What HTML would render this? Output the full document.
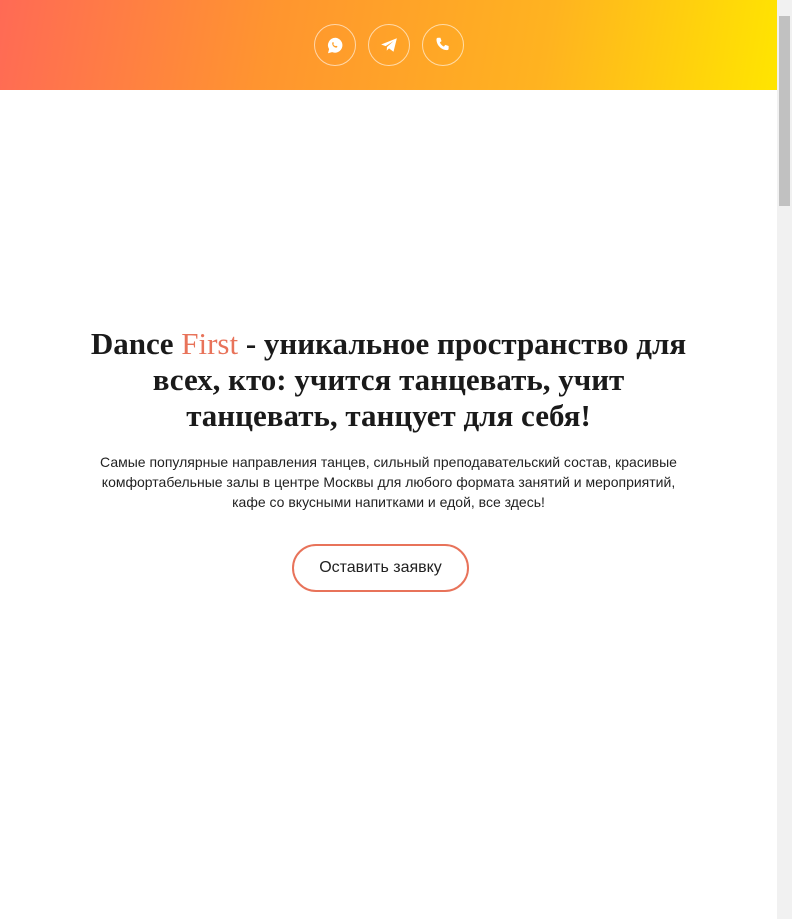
<!DOCTYPE html>
<html><head><meta charset="utf-8"><style>
html,body{margin:0;padding:0;}
body{width:792px;height:919px;overflow:hidden;background:#fff;font-family:"Liberation Sans",sans-serif;position:relative;}
.hdr{position:absolute;left:0;top:0;width:777px;height:90px;background:linear-gradient(100deg,#ff6a55 0%,#ff952f 35%,#ffb320 70%,#ffe500 100%);}
.ic{position:absolute;top:24px;width:40px;height:40px;border:1px solid rgba(255,255,255,.6);border-radius:50%;display:flex;align-items:center;justify-content:center;}
.sb{position:absolute;right:0;top:0;width:15px;height:919px;background:#f1f1f1;}
.th{position:absolute;right:2px;top:16px;width:11px;height:190px;background:#c1c1c1;}
h1{position:absolute;left:0;width:777px;top:326px;margin:0;text-align:center;font-family:"Liberation Serif",serif;font-weight:bold;font-size:31px;line-height:36px;color:#1a1a1a;}
h1 span{color:#e8735a;font-weight:normal;}
p{position:absolute;left:88px;width:601px;top:452px;margin:0;text-align:center;font-size:14px;line-height:20px;color:#222;}
.btn{position:absolute;left:292px;top:544px;width:173px;height:44px;border:2px solid #e8735a;border-radius:24px;display:flex;align-items:center;justify-content:center;font-size:16px;color:#222;}
</style></head><body>
<div class="hdr">
<div class="ic" style="left:314px"><svg width="19" height="19" viewBox="0 0 16 16"><path d="M8 1.5a6.3 6.3 0 0 0-5.4 9.6L1.7 14.5l3.4-.9A6.3 6.3 0 1 0 8 1.5z" fill="#fff"/><path d="M6 5c.4 0 .6 1.3.4 1.6-.3.3-.2.5.3 1.1.5.6 1 .9 1.3.7.3-.3 1.6 0 1.6.4 0 .6-.6 1-1.2 1C7 9.8 5.2 8 5.2 6.3 5.2 5.6 5.6 5 6 5z" fill="#ffa02a"/></svg></div>
<div class="ic" style="left:368px"><svg width="18" height="18" viewBox="0 0 16 16"><path d="M1 7.5L15 2l-3 12-4-3-2 2 .2-3.2L12 4.5 5 9z" fill="#fff"/></svg></div>
<div class="ic" style="left:422px"><svg width="18" height="18" viewBox="0 0 16 16"><path d="M3.5 1.5l2.2 0 1 3-1.5 1.2c.7 1.7 2 3 3.6 3.7l1.2-1.5 3 1v2.3c0 .8-.7 1.3-1.5 1.3C6.6 12.5 2.2 8.2 2.2 3c0-.8.5-1.5 1.3-1.5z" fill="#fff"/></svg></div>
</div>
<h1>Dance <span>First</span> - уникальное пространство для<br>всех, кто: учится танцевать, учит<br>танцевать, танцует для себя!</h1>
<p>Самые популярные направления танцев, сильный преподавательский состав, красивые комфортабельные залы в центре Москвы для любого формата занятий и мероприятий, кафе со вкусными напитками и едой, все здесь!</p>
<div class="btn">Оставить заявку</div>
<div class="sb"><div class="th"></div></div>
</body></html>
